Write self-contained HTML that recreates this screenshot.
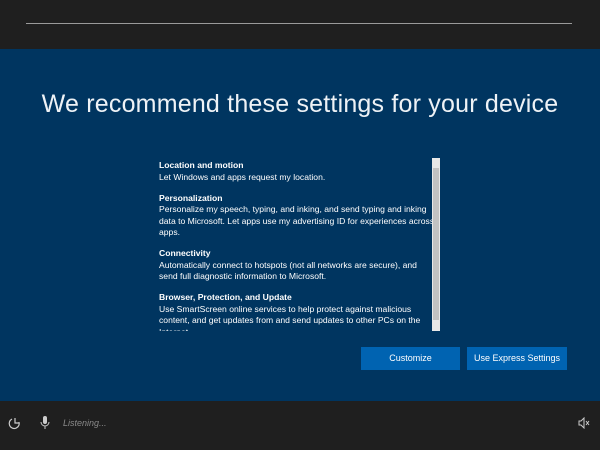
<!DOCTYPE html>
<html><head><style>
body{margin:0;width:600px;height:450px;overflow:hidden;background:#1f1f1f;font-family:"Liberation Sans",sans-serif;position:relative}
.line{position:absolute;left:26px;top:23px;width:546px;height:1px;background:#9a9a9a}
.blue{position:absolute;left:0;top:49px;width:600px;height:352px;background:#003560}
h1{position:absolute;left:0;width:600px;top:90px;margin:0;text-align:center;color:#eef2f6;font-weight:normal;font-size:25px;letter-spacing:0.2px}
.box{position:absolute;left:159px;top:160px;width:285px;height:171px;overflow:hidden;color:#fff;font-size:8.6px;line-height:11.5px;white-space:nowrap}
.box b{display:block}
.box p{margin:0 0 9.5px}
.sb{position:absolute;left:432px;top:158px;width:8px;height:173px;background:#e8e8e8}
.sb i{position:absolute;left:1px;top:10px;width:6px;height:152px;background:#c2c2c2}
.btn{position:absolute;top:347px;height:23px;background:#0063b1;color:#fff;font-size:9px;line-height:23px;text-align:center}
.bot{color:#ccc;position:absolute;font-size:9px}
</style></head><body>
<div class="line"></div>
<div class="blue"></div>
<h1>We recommend these settings for your device</h1>
<div class="box">
<p><b>Location and motion</b>Let Windows and apps request my location.</p>
<p><b>Personalization</b>Personalize my speech, typing, and inking, and send typing and inking<br>data to Microsoft. Let apps use my advertising ID for experiences across<br>apps.</p>
<p><b>Connectivity</b>Automatically connect to hotspots (not all networks are secure), and<br>send full diagnostic information to Microsoft.</p>
<p><b>Browser, Protection, and Update</b>Use SmartScreen online services to help protect against malicious<br>content, and get updates from and send updates to other PCs on the<br>Internet.</p>
</div>
<div class="sb"><i></i></div>
<div class="btn" style="left:361px;width:99px">Customize</div>
<div class="btn" style="left:467px;width:100px">Use Express Settings</div>
<svg style="position:absolute;left:8px;top:416px" width="14" height="14" viewBox="0 0 14 14" fill="none" stroke="#ccc" stroke-width="1.2"><path d="M4 3A5 5 0 1 0 11 6M7 2v5h4"/></svg>
<svg style="position:absolute;left:40px;top:415px" width="10" height="15" viewBox="0 0 10 15" fill="#ccc"><rect x="3" y="1" width="4" height="8" rx="2"/><path d="M1 7a4 4 0 0 0 8 0M5 11v3" stroke="#ccc" fill="none"/></svg>
<div class="bot" style="left:63px;top:418px;font-style:italic;color:#8a8a8a">Listening...</div>
<svg style="position:absolute;left:578px;top:417px" width="12" height="12" viewBox="0 0 12 12" fill="none" stroke="#ccc"><path d="M1 4h2l3-3v10l-3-3H1z"/><path d="M8 4l3 4M11 4l-3 4"/></svg>
</body></html>
